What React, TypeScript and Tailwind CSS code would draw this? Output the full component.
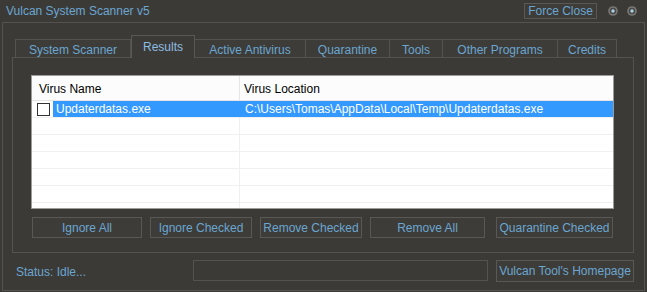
import React from "react";

const tabs = [
  { label: "System Scanner", w: "w-[116px]" },
  { label: "Results", w: "w-[64px]", active: true },
  { label: "Active Antivirus", w: "w-[111px]" },
  { label: "Quarantine", w: "w-[84px]" },
  { label: "Tools", w: "w-[53px]" },
  { label: "Other Programs", w: "w-[115px]" },
  { label: "Credits", w: "w-[59px]" },
];

const actions = [
  { label: "Ignore All", w: "w-[110px]", gap: "" },
  { label: "Ignore Checked", w: "w-[102px]", gap: "ml-[8px]" },
  { label: "Remove Checked", w: "w-[102px]", gap: "ml-[8px]" },
  { label: "Remove All", w: "w-[115px]", gap: "ml-[8px]" },
  { label: "Quarantine Checked", w: "w-[117px]", gap: "ml-[11px]" },
];

function Knob() {
  return (
    <svg width="10" height="10" viewBox="0 0 10 10">
      <circle cx="5" cy="5" r="4.8" fill="#7a7876" />
      <circle cx="5" cy="5" r="3.2" fill="#4a4845" />
      <circle cx="5" cy="5" r="1.7" fill="#a9d2e8" />
    </svg>
  );
}

function DarkButton({ label, className }: { label: string; className: string }) {
  return (
    <button
      className={`flex items-center justify-center border border-[#5a5855] bg-[#3e3c39] text-[12px] text-[#6aa6d0] ${className}`}
    >
      {label}
    </button>
  );
}

export default function App() {
  const emptyRows = [0, 1, 2, 3, 4];
  return (
    <div
      className="w-[647px] h-[292px] bg-[#3c3a37] flex flex-col text-[12px] leading-none overflow-hidden"
      style={{ fontFamily: '"Liberation Sans", Arial, sans-serif' }}
    >
      {/* title bar */}
      <div className="h-[22px] flex items-center pl-[6px] pr-[10px]">
        <span className="text-[#6aa6d0]">Vulcan System Scanner v5</span>
        <button className="ml-auto w-[73px] h-[16px] border border-[#5a5855] bg-[#3e3c39] text-[12px] text-[#6aa6d0] flex items-center justify-center">
          Force Close
        </button>
        <div className="ml-[11px] flex gap-[9px]">
          <Knob />
          <Knob />
        </div>
      </div>

      {/* main frame */}
      <div className="mx-[2px] h-[269px] border border-[#555350] flex flex-col">
        <div className="pl-[9px] pr-[10px] pt-[12px]">
          {/* tab strip */}
          <div className="flex items-end h-[22px] pl-[3px]">
            {tabs.map((t) =>
              t.active ? (
                <div
                  key={t.label}
                  className={`${t.w} h-[23px] -mb-px relative z-10 border border-b-0 border-[#5a5855] bg-[#3c3a37] flex items-start justify-center pt-[5px] text-[#8cbde0]`}
                >
                  {t.label}
                </div>
              ) : (
                <div
                  key={t.label}
                  className={`${t.w} h-[18px] border border-b-0 border-l-0 first:border-l border-[#555350] bg-[#3e3c39] flex items-center justify-center pt-[3px] text-[#6aa6d0]`}
                >
                  {t.label}
                </div>
              )
            )}
          </div>

          {/* tab panel */}
          <div className="w-[622px] h-[196px] border border-[#555350] pt-[17px] pl-[18px]">
            {/* list view */}
            <div className="w-[583px] h-[134px] border border-[#9c9c9c] bg-white flex flex-col overflow-hidden text-black">
              <div className="h-[25px] flex border-b border-[#e5e5e5] bg-[#fcfcfc] shrink-0">
                <div className="w-[208px] border-r border-[#e5e5e5] flex items-center pl-[7px] pt-[1px]">
                  Virus Name
                </div>
                <div className="flex-1 flex items-center pl-[4px] pt-[1px]">Virus Location</div>
              </div>
              <div className="h-[17px] flex border-b border-[#f0f0f0] shrink-0">
                <div className="w-[208px] flex items-center pl-[5px]">
                  <span className="w-[13px] h-[13px] border border-[#333] bg-white shrink-0" />
                  <span className="ml-[3px] h-full flex-1 bg-[#3399ff] text-white flex items-center pl-[3px]">
                    Updaterdatas.exe
                  </span>
                </div>
                <div className="w-px bg-[#3399ff]" />
                <div className="flex-1 bg-[#3399ff] text-white flex items-center pl-[4px]">
                  C:\Users\Tomas\AppData\Local\Temp\Updaterdatas.exe
                </div>
              </div>
              {emptyRows.map((r) => (
                <div key={r} className="h-[17px] flex border-b border-[#f0f0f0] shrink-0">
                  <div className="w-[208px] border-r border-[#f0f0f0]" />
                  <div className="flex-1" />
                </div>
              ))}
              <div className="flex-1 flex">
                <div className="w-[208px] border-r border-[#f0f0f0]" />
              </div>
            </div>

            {/* action buttons */}
            <div className="flex h-[21px] mt-[8px] ml-[1px]">
              {actions.map((a) => (
                <DarkButton key={a.label} label={a.label} className={`${a.w} h-[21px] ${a.gap}`} />
              ))}
            </div>
          </div>
        </div>

        {/* status row */}
        <div className="flex items-start mt-[7px] pl-[13px]">
          <span className="w-[177px] h-[21px] flex items-center text-[#6aa6d0] pt-[2px]">Status: Idle...</span>
          <div className="w-[295px] h-[21px] border border-[#555350] bg-[#3c3a37]" />
          <DarkButton label="Vulcan Tool's Homepage" className="ml-[8px] w-[138px] h-[22px]" />
        </div>
      </div>
    </div>
  );
}
